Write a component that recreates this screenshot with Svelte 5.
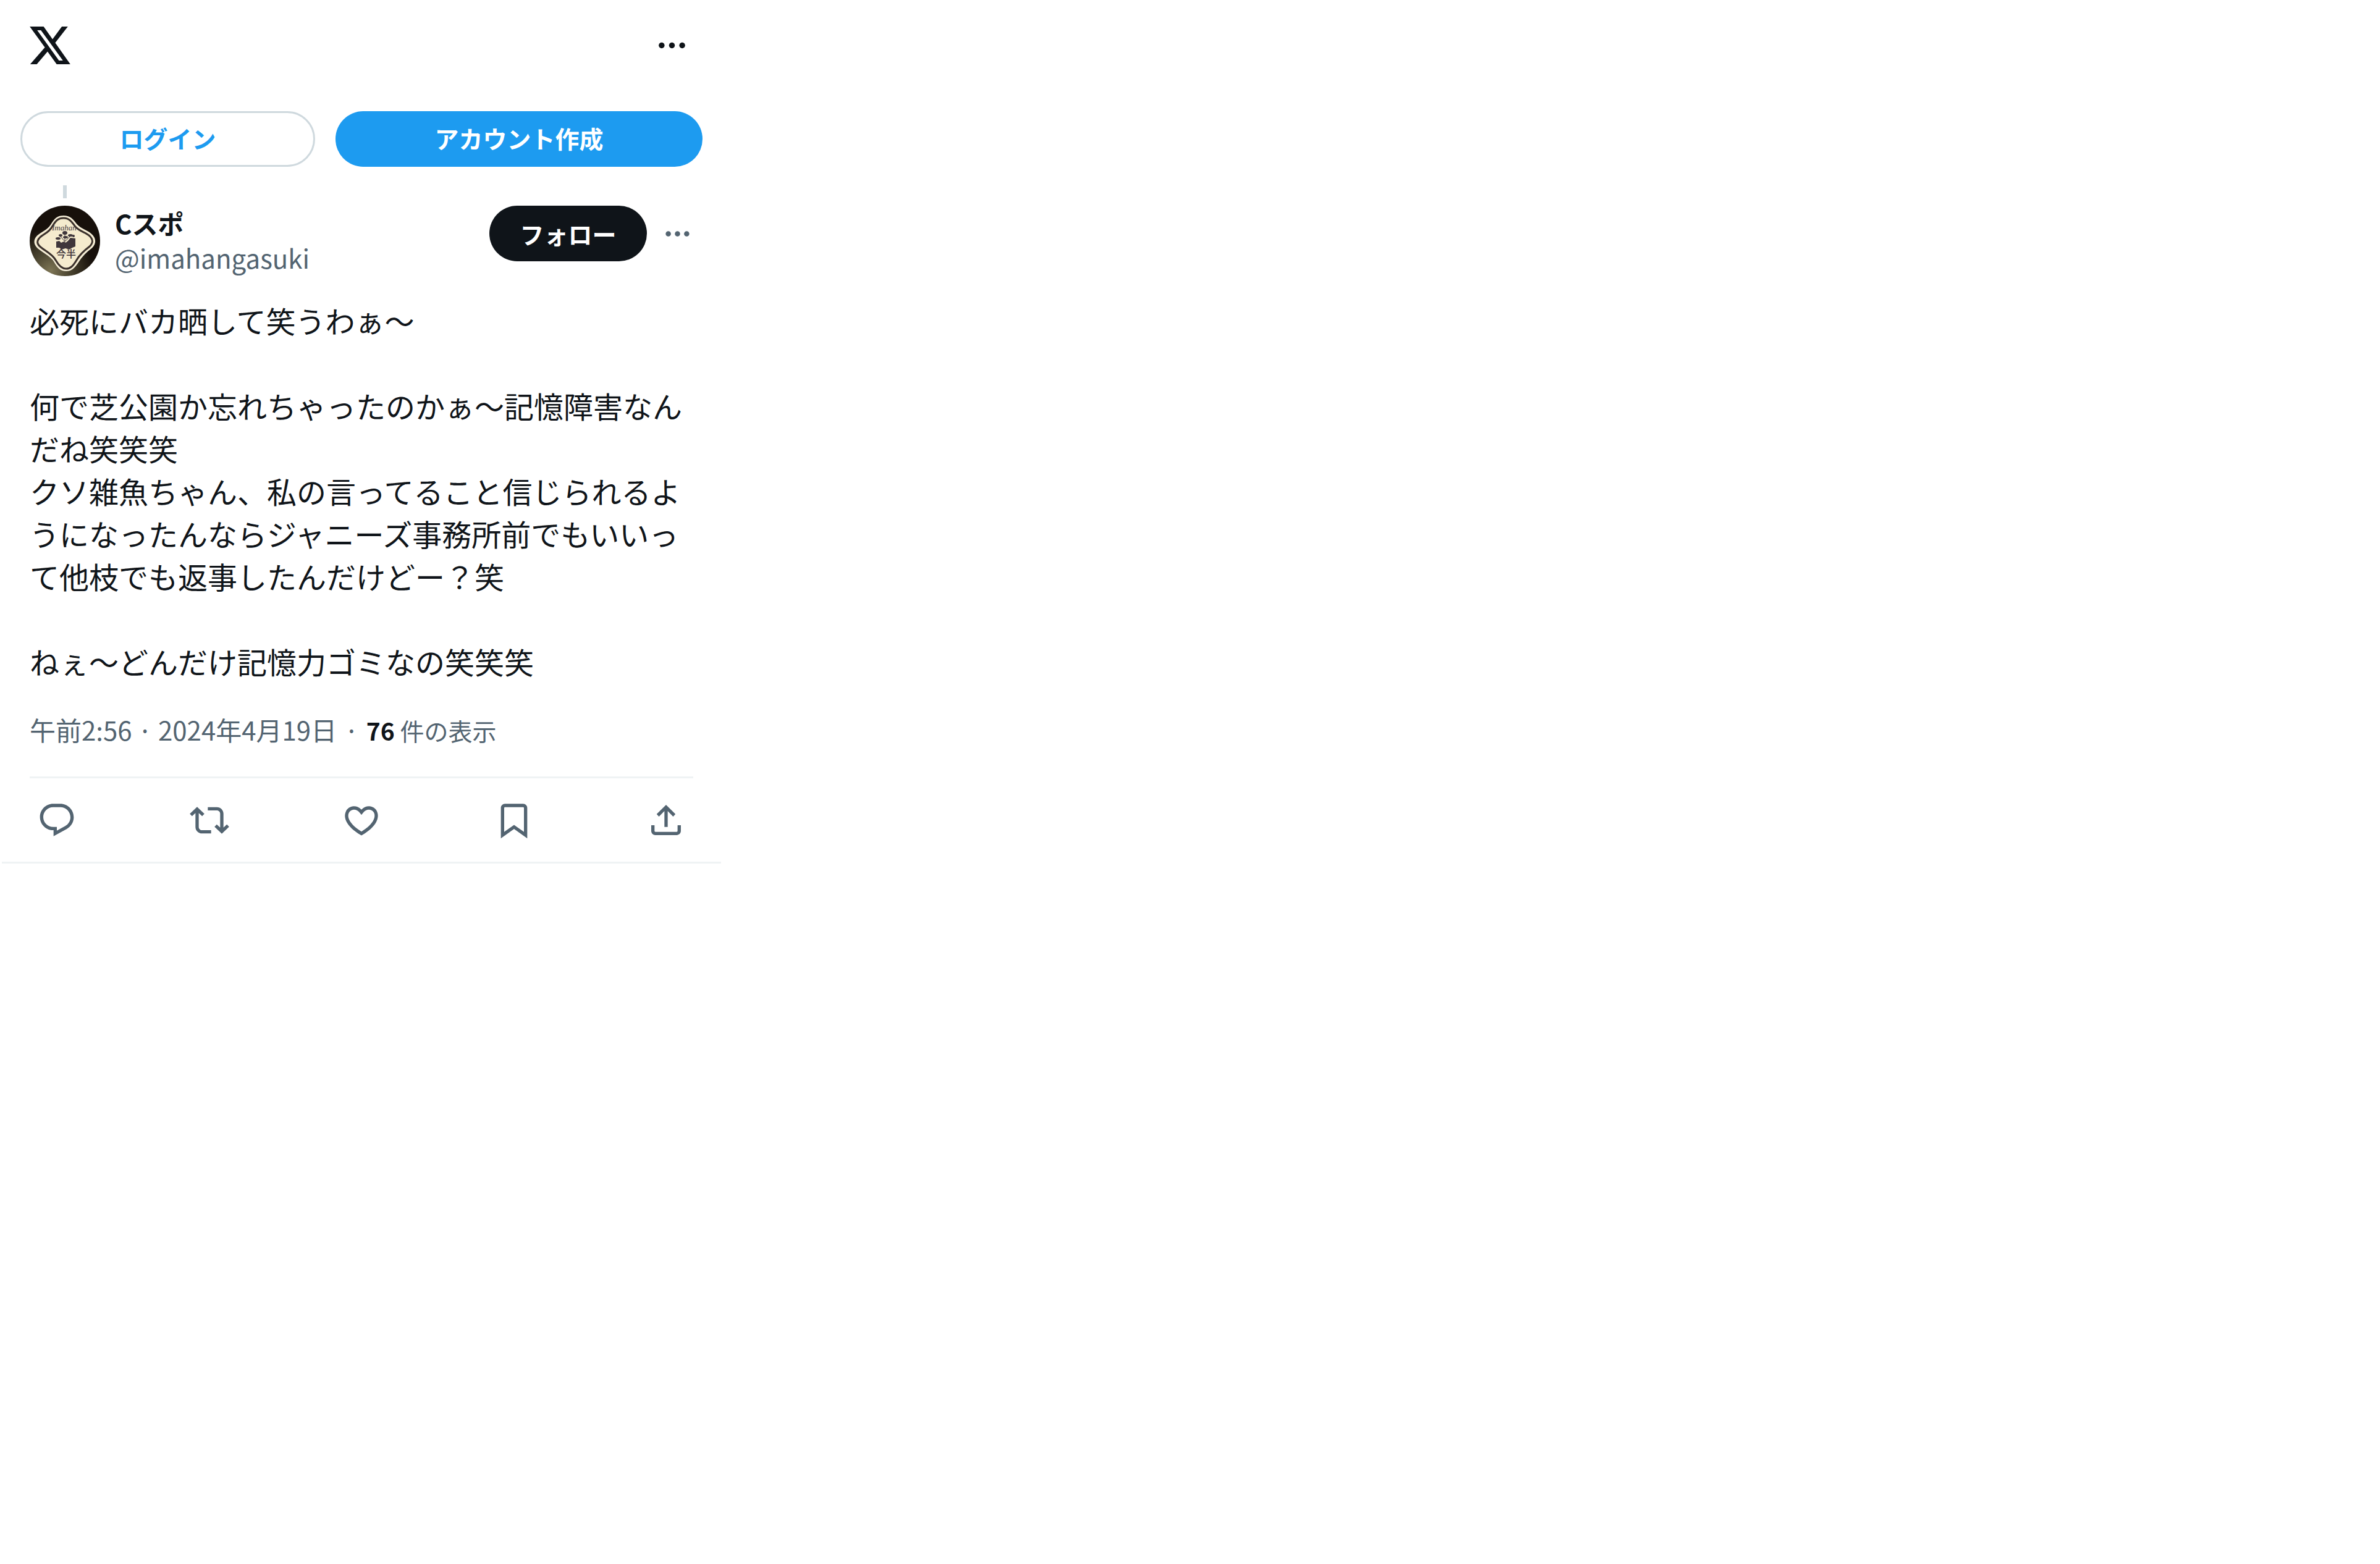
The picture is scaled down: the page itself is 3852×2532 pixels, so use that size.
<script>
  const tweet = [
    '必死にバカ晒して笑うわぁ〜',
    '',
    '何で芝公園か忘れちゃったのかぁ〜記憶障害なんだね笑笑笑',
    'クソ雑魚ちゃん、私の言ってること信じられるようになったんならジャニーズ事務所前でもいいって他枝でも返事したんだけどー？笑',
    '',
    'ねぇ〜どんだけ記憶力ゴミなの笑笑笑'
  ].join('\n');

  const actions = [
    { label: '返信', d: 'M1.751 10c0-4.42 3.584-8 8.005-8h4.366c4.49 0 8.129 3.64 8.129 8.13 0 2.96-1.607 5.68-4.196 7.11l-8.054 4.46v-3.69h-.067c-4.49.1-8.183-3.51-8.183-8.01zm8.005-6c-3.317 0-6.005 2.69-6.005 6 0 3.37 2.77 6.08 6.138 6.01l.351-.01h1.761v2.3l5.087-2.81c1.951-1.08 3.163-3.13 3.163-5.36 0-3.39-2.744-6.13-6.129-6.13H9.756z' },
    { label: 'リポスト', d: 'M4.5 3.88l4.432 4.14-1.364 1.46L5.5 7.55V16c0 1.1.896 2 2 2H13v2H7.5c-2.209 0-4-1.79-4-4V7.55L1.432 9.48.068 8.02 4.5 3.88zM16.5 6H11V4h5.5c2.209 0 4 1.79 4 4v8.45l2.068-1.93 1.364 1.46-4.432 4.14-4.432-4.14 1.364-1.46 2.068 1.93V8c0-1.1-.896-2-2-2z' },
    { label: 'いいね', d: 'M16.697 5.5c-1.222-.06-2.679.51-3.89 2.16l-.805 1.09-.806-1.09C9.984 6.01 8.526 5.44 7.304 5.5c-1.243.07-2.349.78-2.91 1.91-.552 1.12-.633 2.78.479 4.82 1.074 1.97 3.257 4.27 7.129 6.61 3.87-2.34 6.052-4.64 7.126-6.61 1.111-2.04 1.03-3.7.477-4.82-.561-1.13-1.666-1.84-2.908-1.91zm4.187 7.69c-1.351 2.48-4.001 5.12-8.379 7.67l-.503.3-.504-.3c-4.379-2.55-7.029-5.19-8.382-7.67-1.36-2.5-1.41-4.86-.514-6.67.887-1.79 2.647-2.91 4.601-3.01 1.651-.09 3.368.56 4.798 2.01 1.429-1.45 3.146-2.1 4.796-2.01 1.954.1 3.714 1.22 4.601 3.01.896 1.81.846 4.17-.514 6.67z' },
    { label: 'ブックマーク', d: 'M4 4.5C4 3.12 5.119 2 6.5 2h11C18.881 2 20 3.12 20 4.5v18.44l-8-5.71-8 5.71V4.5zM6.5 4c-.276 0-.5.22-.5.5v14.56l6-4.29 6 4.29V4.5c0-.28-.224-.5-.5-.5h-11z' },
    { label: '共有', d: 'M12 2.59l5.7 5.7-1.41 1.42L13 6.41V16h-2V6.41l-3.3 3.3-1.41-1.42L12 2.59zM21 15l-.02 3.51c0 1.38-1.12 2.49-2.5 2.49H5.5C4.11 21 3 19.88 3 18.5V15h2v3.5c0 .28.22.5.5.5h12.98c.28 0 .5-.22.5-.5L19 15h2z' }
  ];
</script>

<div class="page">
  <header class="topbar">
    <a class="logo" href="/" aria-label="X">
      <svg viewBox="0 0 196 182"><path fill-rule="evenodd" d="M0 0H67L110 61L155 0H184L123 78L196 182H130L86 121L34 182H2L73 101ZM36 18L141 164H160L54 18Z" /></svg>
    </a>
    <button class="more" type="button" aria-label="その他">
      <svg viewBox="0 0 24 24"><circle cx="5" cy="12" r="2" /><circle cx="12" cy="12" r="2" /><circle cx="19" cy="12" r="2" /></svg>
    </button>
  </header>

  <nav class="auth">
    <a class="pill login" href="/login">ログイン</a>
    <a class="pill signup" href="/signup">アカウント作成</a>
  </nav>

  <article>
    <div class="thread"></div>
    <div class="author">
      <svg class="avatar" viewBox="0 0 114 114" role="img" aria-label="Cスポ">
        <defs>
          <radialGradient id="glow" cx="0.3" cy="0.92" r="0.6">
            <stop offset="0" stop-color="#7d7555" />
            <stop offset="0.45" stop-color="#4a4430" />
            <stop offset="1" stop-color="#17100b" />
          </radialGradient>
          <clipPath id="round"><circle cx="57" cy="57" r="57" /></clipPath>
        </defs>
        <g clip-path="url(#round)">
          <rect width="114" height="114" fill="url(#glow)" />
          <path class="plate" d="M55 17C66 17 70 23 76 31C83 39 93 40 99 46C107 53 107 61 100 68C92 74 84 82 79 90C72 101 67 105 59 105C50 105 45 99 40 90C35 81 26 78 17 71C7 64 6 56 13 49C21 42 29 41 35 31C41 21 45 17 55 17Z" />
          <path class="rim" d="M55 20C64 20 68 26 74 34C81 42 91 43 97 49C103 55 103 60 97 66C89 72 81 79 76 88C70 98 66 102 59 102C52 102 47 97 42 88C37 79 28 75 19 68C11 62 11 57 17 51C24 45 32 43 37 33C43 23 47 20 55 20Z" />
          <text class="script" x="36" y="40">Imahan</text>
          <g class="crest">
            <path d="M43 58l5-1 3 3 4-2 3 2 4-3 4-5 8 1v13l-5 2-5 3-6-2-6 2-4-3h-5z" />
            <path d="M57 60V46M57 58l-7-8M58 57l8-8" stroke="#3f363b" stroke-width="1" />
            <ellipse cx="57" cy="44" rx="4" ry="3" />
            <ellipse cx="50" cy="48" rx="3" ry="2" />
            <ellipse cx="66" cy="48" rx="4" ry="2" />
            <ellipse cx="46" cy="53" rx="4" ry="2" />
            <ellipse cx="58" cy="51" rx="4" ry="2" />
            <circle cx="71" cy="49" r="2" />
          </g>
          <text class="seal" x="43" y="84">今半</text>
        </g>
      </svg>
      <div class="names">
        <a class="name" href="/imahangasuki">Cスポ</a>
        <a class="handle" href="/imahangasuki">@imahangasuki</a>
      </div>
      <button class="pill follow" type="button">フォロー</button>
      <button class="more small" type="button" aria-label="もっと見る">
        <svg viewBox="0 0 24 24"><circle cx="5" cy="12" r="2" /><circle cx="12" cy="12" r="2" /><circle cx="19" cy="12" r="2" /></svg>
      </button>
    </div>

    <p class="text">{tweet}</p>

    <div class="meta">
      <time datetime="2024-04-19T02:56">午前2:56 · 2024年4月19日</time>
      <span class="dot">·</span>
      <span class="views"><strong>76</strong> 件の表示</span>
    </div>

    <div class="actions">
      {#each actions as action}
        <button type="button" aria-label={action.label}>
          <svg viewBox="0 0 24 24"><path d={action.d} /></svg>
        </button>
      {/each}
    </div>
  </article>
</div>

<style>
  :global(body) {
    margin: 0;
    background: #fff;
  }
  .page {
    box-sizing: border-box;
    width: 100%;
    max-width: 1170px;
    padding: 0 3px;
    color: #0f1419;
    font-family: 'Noto Sans CJK JP', sans-serif;
  }
  button {
    margin: 0;
    padding: 0;
    border: 0;
    background: none;
    color: inherit;
    font-family: inherit;
    cursor: pointer;
  }
  a {
    color: inherit;
    text-decoration: none;
  }
  svg {
    display: block;
    fill: currentColor;
  }
  .topbar {
    display: flex;
    align-items: center;
    justify-content: space-between;
    height: 147px;
    padding: 0 51px 0 45px;
  }
  .logo svg {
    width: 66px;
    height: 61px;
  }
  .more svg {
    width: 57px;
    height: 57px;
  }
  .auth {
    display: grid;
    grid-template-columns: 477fr 594fr;
    gap: 33px;
    padding: 33px 30px 0;
  }
  .pill {
    display: flex;
    align-items: center;
    justify-content: center;
    box-sizing: border-box;
    height: 90px;
    border-radius: 45px;
    font-size: 39px;
    font-weight: 700;
    line-height: 57px;
  }
  .auth .pill {
    padding-bottom: 4px;
  }
  .login {
    border: 3px solid #cfd9de;
    color: #1d9bf0;
  }
  .signup {
    background: #1d9bf0;
    color: #fff;
  }
  article {
    padding: 30px 45px 0;
    border-bottom: 3px solid #eff3f4;
  }
  .thread {
    width: 6px;
    height: 21px;
    margin: 0 0 12px 54px;
    background: #cfd9de;
  }
  .author {
    display: flex;
    align-items: flex-start;
    height: 114px;
  }
  .avatar {
    flex: none;
    width: 114px;
    height: 114px;
  }
  .plate {
    fill: #f3e8c8;
    stroke: #f6efdb;
    stroke-width: 2;
  }
  .rim {
    fill: #f5ebce;
    stroke: #3a302c;
    stroke-width: 3;
  }
  .crest,
  .script,
  .seal {
    fill: #3f363b;
  }
  .script {
    font: italic 13px 'Liberation Serif', serif;
  }
  .seal {
    font: 500 16px 'Noto Sans CJK JP', sans-serif;
  }
  .names {
    display: flex;
    flex: 1;
    flex-direction: column;
    min-width: 0;
    padding-left: 24px;
    line-height: 56px;
  }
  .name {
    font-size: 42px;
    font-weight: 700;
  }
  .handle {
    color: #536471;
    font-size: 42px;
  }
  .follow {
    width: 255px;
    background: #0f1419;
    color: #fff;
  }
  .small {
    display: flex;
    align-items: center;
    height: 90px;
    margin-left: 24px;
    color: #536471;
  }
  .small svg {
    width: 51px;
    height: 51px;
  }
  .text {
    margin: 37px 0 0;
    font-size: 48px;
    line-height: 69px;
    white-space: pre-wrap;
    line-break: anywhere;
  }
  .meta {
    display: flex;
    align-items: baseline;
    padding: 46px 0 45px;
    color: #536471;
    font-size: 42px;
    line-height: 60px;
  }
  .dot {
    padding: 0 12px;
  }
  .views {
    font-size: 39px;
  }
  .views strong {
    color: #0f1419;
  }
  .actions {
    display: flex;
    align-items: center;
    justify-content: space-between;
    height: 135px;
    padding: 0 12px;
    border-top: 3px solid #eff3f4;
    color: #536471;
  }
  .actions svg {
    width: 64px;
    height: 64px;
  }
</style>
